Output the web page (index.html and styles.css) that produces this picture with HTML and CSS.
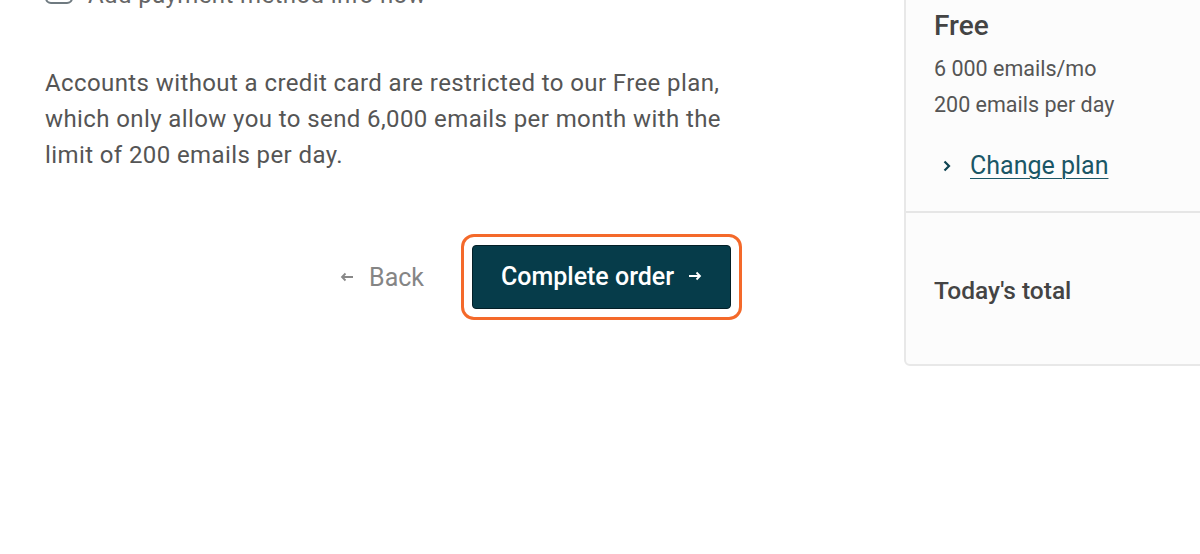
FILE: index.html
```html
<!DOCTYPE html>
<html>
<head>
<meta charset="utf-8">
<link rel="stylesheet" href="styles.css">
</head>
<body>
<div class="page">
  <main class="main">
    <label class="check-row">
      <span class="checkbox"></span>
      <span class="check-label">Add payment method info now</span>
    </label>
    <p class="note">Accounts without a credit card are restricted to our Free plan, which only allow you to send 6,000 emails per month with the limit of 200 emails per day.</p>
    <div class="actions">
      <a class="back"><svg class="arrow-l" width="14" height="10" viewBox="0 0 14 10"><path d="M13 5 H2 M5.5 1.5 L2 5 L5.5 8.5" fill="none" stroke="#888" stroke-width="1.8"/></svg>Back</a>
      <div class="focus-ring">
        <button class="primary">Complete order<svg class="arrow-r" width="14" height="10" viewBox="0 0 14 10"><path d="M1 5 H12 M8.5 1.5 L12 5 L8.5 8.5" fill="none" stroke="#fff" stroke-width="1.8"/></svg></button>
      </div>
    </div>
  </main>
  <aside class="summary">
    <div class="plan">
      <h2 class="plan-name">Free</h2>
      <div class="plan-line">6 000 emails/mo</div>
      <div class="plan-line">200 emails per day</div>
      <a class="change">
        <svg class="chev" width="10" height="14" viewBox="0 0 10 14"><path d="M2.5 2.5 L7 7 L2.5 11.5" fill="none" stroke="#0f4452" stroke-width="2.2"/></svg>
        <span class="change-text">Change plan</span>
      </a>
    </div>
    <div class="total">
      <div class="total-label">Today's total</div>
    </div>
  </aside>
</div>
</body>
</html>
```
FILE: styles.css
```css
html, body {
  margin: 0;
  padding: 0;
  background: #ffffff;
  overflow: hidden;
}
body {
  font-family: Roboto, "Liberation Sans", sans-serif;
  color: #555555;
  width: 1200px;
  height: 554px;
}
.page {
  display: flex;
  margin-top: -60px;
}
.main {
  flex: 0 0 904px;
  box-sizing: border-box;
  padding-left: 45px;
  padding-top: 36px;
}
.check-row {
  display: flex;
  align-items: center;
  gap: 15px;
  height: 28px;
}
.checkbox {
  width: 24px;
  height: 24px;
  border: 2px solid #6f7a80;
  border-radius: 6px;
  box-sizing: content-box;
}
.check-label {
  font-size: 24px;
  letter-spacing: 0.4px;
  color: #666;
  margin-top: 10px;
}
.note {
  margin: 61px 0 0;
  width: 700px;
  font-size: 24px;
  letter-spacing: 0.4px;
  line-height: 36px;
  color: #555;
}
.actions {
  display: flex;
  align-items: center;
  justify-content: flex-end;
  width: 686px;
  margin-top: 72px;
  gap: 37px;
}
.back {
  font-size: 25px;
  color: #858585;
  display: flex;
  align-items: center;
}
.arrow-l {
  margin-right: 15px;
}
.focus-ring {
  padding: 8px;
  border: 3px solid #f4692a;
  border-radius: 13px;
  margin: -11px;
  margin-left: 0;
}
.primary {
  display: flex;
  align-items: center;
  justify-content: center;
  width: 259px;
  height: 64px;
  background: #063c4a;
  color: #ffffff;
  border: 1px solid #031f27;
  border-radius: 4px;
  font-family: Roboto, "Liberation Sans", sans-serif;
  font-size: 25px;
  font-weight: 500;
  padding: 0 0 2px;
}
.arrow-r {
  margin-left: 14px;
}
.summary {
  flex: 0 0 330px;
  background: #fcfcfc;
  border: 2px solid #e8e8e8;
  border-radius: 6px;
  box-sizing: border-box;
}
.plan {
  padding: 66px 0 27px 28px;
  border-bottom: 2px solid #e6e6e6;
}
.plan-name {
  margin: 0;
  font-size: 28px;
  font-weight: 500;
  color: #444;
  line-height: 36px;
}
.plan-line {
  font-size: 21.5px;
  line-height: 36px;
  color: #555;
}
.plan-name + .plan-line {
  margin-top: 7px;
}
.change {
  display: flex;
  align-items: center;
  margin-top: 25px;
  margin-left: 8px;
  gap: 18px;
  color: #0f4a5a;
}
.change-text {
  font-size: 25px;
  text-decoration: underline;
  text-underline-offset: 4px;
  text-decoration-thickness: 1px;
  color: #1a5666;
  line-height: 36px;
}
.total {
  padding: 61px 0 56px 28px;
}
.total-label {
  font-size: 24.5px;
  font-weight: 500;
  color: #444;
  line-height: 34px;
}
```
